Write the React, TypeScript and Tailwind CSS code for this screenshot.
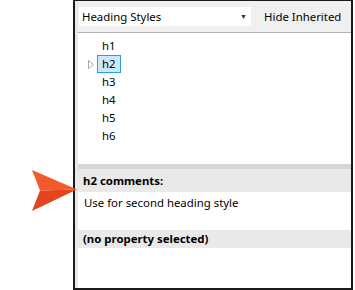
import React from "react";

const headings = ["h1", "h2", "h3", "h4", "h5", "h6"];

const App: React.FC = () => {
  return (
    <div className="relative w-[355px] h-[290px] bg-white overflow-hidden font-['Noto_Sans',sans-serif] text-[11.4px] text-black">
      {/* Styles panel */}
      <div className="ml-[73px] w-[280px] h-[290px] border-l-2 border-r-2 border-b-2 border-t border-[#1a1a1a] flex">
        <div className="w-[3px] bg-[#e8e8e8] shrink-0" />
        <div className="flex-1 flex flex-col">
          {/* Toolbar */}
          <div className="h-[32px] bg-[#f0f0f0] border-b border-[#b4b4b4] flex items-center shrink-0">
            <div className="ml-[1px] w-[172px] h-[19px] bg-white flex items-center pl-[3px] pr-[4px]">
              <span className="flex-1 leading-none">Heading Styles</span>
              <span className="text-[7px] leading-none text-[#333]">▼</span>
            </div>
            <span className="ml-[13px] leading-none">Hide Inherited</span>
          </div>

          {/* Tree */}
          <div className="flex-1 pt-[4px]">
            {headings.map((h) => (
              <div key={h} className="h-[18px] flex items-center">
                <div className="w-[19px] flex justify-end pr-[3px]">
                  {h === "h2" && (
                    <svg width="6" height="9" viewBox="0 0 6 9">
                      <path d="M0.5 0.5 L5.5 4.5 L0.5 8.5 Z" fill="none" stroke="#a6a6a6" />
                    </svg>
                  )}
                </div>
                <div
                  className={`h-[18px] px-[4px] flex items-center ${
                    h === "h2" ? "bg-[#cce8ff] border border-[#26a0da]" : "border border-transparent"
                  }`}
                >
                  {h}
                </div>
              </div>
            ))}
          </div>

          <div className="h-[5px] bg-[#d6d6d6] shrink-0" />
          <div className="h-[23px] bg-[#e9e9e9] flex items-center pl-[5px] font-bold shrink-0">
            h2 comments:
          </div>
          <div className="h-[38px] pl-[6px] pt-[2px] shrink-0">Use for second heading style</div>
          <div className="h-[18px] bg-[#e9e9e9] flex items-center pl-[5px] font-bold shrink-0">
            (no property selected)
          </div>
          <div className="h-[40px] shrink-0" />
        </div>
      </div>

      {/* Callout arrow */}
      <svg className="absolute left-[30px] top-[169px]" width="48" height="43" viewBox="0 0 48 43">
        <path d="M2 1 L47 20.5 L10 21.5 Z" fill="#f15a2b" />
        <path d="M10 21.5 L47 20.5 L2 42 Z" fill="#e3461f" />
      </svg>
    </div>
  );
};

export default App;
